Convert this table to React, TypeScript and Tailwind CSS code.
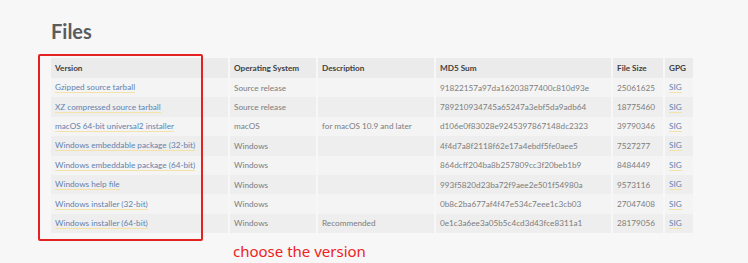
const rows = [
  ["Gzipped source tarball", "Source release", "", "91822157a97da16203877400c810d93e", "25061625"],
  ["XZ compressed source tarball", "Source release", "", "789210934745a65247a3ebf5da9adb64", "18775460"],
  ["macOS 64-bit universal2 installer", "macOS", "for macOS 10.9 and later", "d106e0f83028e9245397867148dc2323", "39790346"],
  ["Windows embeddable package (32-bit)", "Windows", "", "4f4d7a8f2118f62e17a4ebdf5fe0aee5", "7527277"],
  ["Windows embeddable package (64-bit)", "Windows", "", "864dcff204ba8b257809cc3f20beb1b9", "8484449"],
  ["Windows help file", "Windows", "", "993f5820d23ba72f9aee2e501f54980a", "9573116"],
  ["Windows installer (32-bit)", "Windows", "", "0b8c2ba677af4f47e534c7eee1c3cb03", "27047408"],
  ["Windows installer (64-bit)", "Windows", "Recommended", "0e1c3a6ee3a05b5c4cd3d43fce8311a1", "28179056"],
]

const headers = ["Version", "Operating System", "Description", "MD5 Sum", "File Size", "GPG"]

function Link({ children }: { children: string }) {
  return (
    <span className="text-[#6283b0] border-b border-[#f5e2a6] leading-[10px]">{children}</span>
  )
}

export default function App() {
  return (
    <div className="relative w-[748px] h-[263px] bg-[#f7f7f7] overflow-hidden font-['Lato',sans-serif]">
      <div className="pl-[51px] pt-[19px]">
        <h2 className="text-[20px] leading-[24px] font-bold text-[#5c5c5c]">Files</h2>
        <div className="mt-[15px] grid grid-cols-[177px_86px_116px_175px_50px_28px] gap-x-[2px] text-[8.2px] text-[#7d7d7d]">
          {headers.map((h) => (
            <div key={h} className="h-[20px] flex items-center px-[4px] bg-[#ebebeb] font-bold text-[#3f3f3f]">
              {h}
            </div>
          ))}
          {rows.map((r, i) => {
            const bg = i % 2 === 0 ? "bg-[#f4f4f4]" : "bg-[#eeeeee]"
            return [
              <div key={i + "v"} className={`h-[19.4px] flex items-center px-[4px] ${bg}`}>
                <Link>{r[0]}</Link>
              </div>,
              <div key={i + "o"} className={`h-[19.4px] flex items-center px-[4px] ${bg}`}>{r[1]}</div>,
              <div key={i + "d"} className={`h-[19.4px] flex items-center px-[4px] ${bg}`}>{r[2]}</div>,
              <div key={i + "m"} className={`h-[19.4px] flex items-center px-[4px] ${bg}`}>{r[3]}</div>,
              <div key={i + "s"} className={`h-[19.4px] flex items-center px-[4px] ${bg}`}>{r[4]}</div>,
              <div key={i + "g"} className={`h-[19.4px] flex items-center px-[4px] ${bg}`}>
                <Link>SIG</Link>
              </div>,
            ]
          })}
        </div>
      </div>
      <div className="absolute left-[38px] top-[54px] w-[165px] h-[187px] border-2 border-[#e52222] rounded-[2px]" />
      <div className="absolute left-[233px] top-[241px] text-[15px] leading-[20px] text-[#ee2222] font-['Noto_Sans',sans-serif]">
        choose the version
      </div>
    </div>
  )
}
